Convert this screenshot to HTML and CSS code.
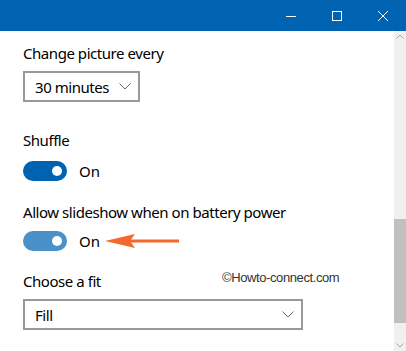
FILE: index.html
```html
<!DOCTYPE html>
<html lang="en">
<head>
    <meta charset="UTF-8">
    <title>Background settings</title>
    <link rel="stylesheet" href="styles.css">
</head>
<body>
    <div class="titlebar">
        <div class="caption-btn">
            <svg width="10" height="10" viewBox="0 0 10 10"><path d="M0 5.5h10" stroke="#fff" stroke-width="1"/></svg>
        </div>
        <div class="caption-btn">
            <svg width="10" height="10" viewBox="0 0 10 10"><rect x="0.5" y="0.5" width="9" height="9" fill="none" stroke="#fff" stroke-width="1"/></svg>
        </div>
        <div class="caption-btn">
            <svg width="10" height="10" viewBox="0 0 10 10"><path d="M0 0L10 10M10 0L0 10" stroke="#fff" stroke-width="1"/></svg>
        </div>
    </div>

    <div class="main">
        <div class="content">
            <div class="label first">Change picture every</div>
            <div class="dropdown short">
                <span>30 minutes</span>
                <svg class="chevron" width="12" height="7" viewBox="0 0 12 7"><path d="M0.5 0.5L6 6L11.5 0.5" fill="none" stroke="#666" stroke-width="1"/></svg>
            </div>

            <div class="label shuffle">Shuffle</div>
            <div class="toggle-row">
                <div class="toggle"><span class="knob"></span></div>
                <span class="state">On</span>
            </div>

            <div class="label battery">Allow slideshow when on battery power</div>
            <div class="toggle-row second">
                <div class="toggle light"><span class="knob"></span></div>
                <span class="state">On</span>
                <svg class="pointer" width="76" height="16" viewBox="0 0 76 16">
                    <path d="M0 8L30 1L25 8L30 15Z" fill="#f26a2c"/>
                    <path d="M25 8H74" stroke="#f26a2c" stroke-width="3"/>
                </svg>
            </div>

            <div class="label fit">Choose a fit</div>
            <div class="watermark">©Howto-connect.com</div>
            <div class="dropdown wide">
                <span>Fill</span>
                <svg class="chevron" width="12" height="7" viewBox="0 0 12 7"><path d="M0.5 0.5L6 6L11.5 0.5" fill="none" stroke="#666" stroke-width="1"/></svg>
            </div>
        </div>

        <div class="scrollbar">
            <svg class="arrow" width="8" height="5" viewBox="0 0 8 5"><path d="M0.5 4.5L4 1L7.5 4.5" fill="none" stroke="#a6a6a6" stroke-width="1"/></svg>
            <div class="track">
                <div class="thumb"></div>
            </div>
            <svg class="arrow" width="8" height="5" viewBox="0 0 8 5"><path d="M0.5 0.5L4 4L7.5 0.5" fill="none" stroke="#a6a6a6" stroke-width="1"/></svg>
        </div>
    </div>
</body>
</html>
```

FILE: styles.css
```css
body {
    margin: 0;
    width: 406px;
    height: 351px;
    overflow: hidden;
    background: #fff;
    font-family: "Noto Sans", "Open Sans", sans-serif;
    color: #000;
}
.titlebar {
    height: 31px;
    background-color: #0063b1;
    display: flex;
    justify-content: flex-end;
}
.caption-btn {
    width: 46px;
    height: 31px;
    display: flex;
    align-items: center;
    justify-content: center;
}
.main {
    display: flex;
    height: 320px;
}
.content {
    flex: 1;
    position: relative;
    padding: 12px 0 0 23px;
}
.label {
    font-size: 15px;
    line-height: 20px;
    letter-spacing: -0.45px;
}
.shuffle {
    margin-top: 28px;
}
.battery {
    margin-top: 21px;
}
.fit {
    margin-top: 20px;
}
.dropdown {
    margin-top: 8px;
    height: 27px;
    border: 2px solid #999;
    display: flex;
    align-items: center;
    justify-content: space-between;
    padding: 0 7px 0 10px;
    font-size: 15px;
    letter-spacing: -0.45px;
}
.dropdown.short {
    width: 96px;
}
.dropdown.wide {
    width: 259px;
}
.chevron {
    display: block;
}
.toggle-row {
    display: flex;
    align-items: center;
    margin-top: 11px;
    height: 20px;
}
.toggle-row.second {
    margin-top: 9px;
}
.toggle {
    width: 44px;
    height: 20px;
    border-radius: 10px;
    background-color: #0063b1;
    position: relative;
}
.toggle.light {
    background-color: #4a90c9;
}
.knob {
    position: absolute;
    right: 5px;
    top: 5px;
    width: 10px;
    height: 10px;
    border-radius: 50%;
    background: #fff;
}
.state {
    font-size: 15px;
    margin-left: 12px;
}
.pointer {
    margin-left: 5px;
}
.watermark {
    position: absolute;
    left: 222px;
    top: 239px;
    font-family: "Liberation Sans", Arial, sans-serif;
    font-size: 13px;
    letter-spacing: -0.4px;
    color: #333;
}
.scrollbar {
    width: 12px;
    background: #f0f0f0;
    display: flex;
    flex-direction: column;
    align-items: center;
}
.scrollbar .arrow {
    margin: 3px 0;
}
.track {
    flex: 1;
    width: 12px;
    position: relative;
}
.thumb {
    position: absolute;
    left: 0;
    right: 0;
    top: 177px;
    height: 104px;
    background: #c0c0c0;
}
```
